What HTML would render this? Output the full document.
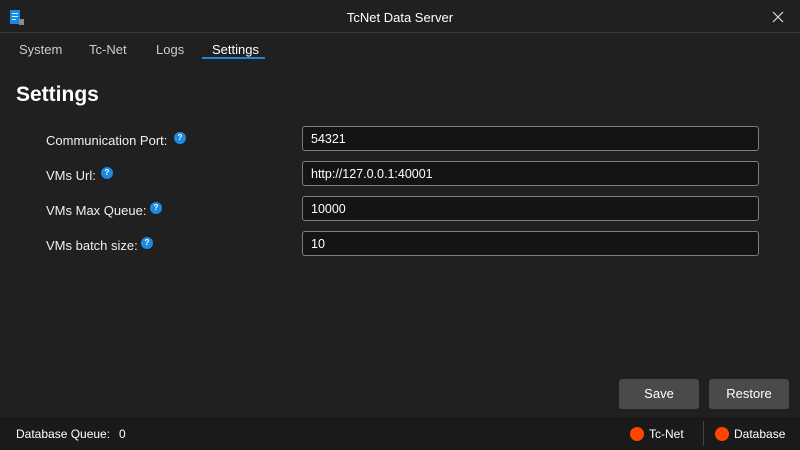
<!DOCTYPE html>
<html><head><style>
*{margin:0;padding:0;box-sizing:border-box}
body{width:800px;height:450px;background:#202020;font-family:"Liberation Sans",sans-serif;color:#fff;position:relative;overflow:hidden}
.t{position:absolute;white-space:nowrap}
.inp{position:absolute;left:302px;width:457px;height:25px;background:#141414;border:1px solid #7d7d7d;border-radius:3px;font-size:12.5px;padding:5px 0 0 8px}
.q{position:absolute;width:12px;height:12px;border-radius:50%;background:#1d8ae0;font-size:8px;font-weight:bold;text-align:center;line-height:12px;color:#fff}
.lbl{font-size:13px;color:#f0f0f0}
.btn{position:absolute;top:379px;width:80px;height:30px;background:#4a4a4a;border-radius:3px;font-size:13px;text-align:center;line-height:30px}
.dot{position:absolute;width:14px;height:14px;border-radius:50%;background:#ff4500;top:427px}
</style></head><body>
<div style="position:absolute;left:0;top:0;width:800px;height:33px;background:#202020;border-bottom:1px solid #3a3a3a"></div>
<svg style="position:absolute;left:9px;top:9px" width="16" height="17"><rect x="1" y="1" width="10" height="14" fill="#1e88e5"/><rect x="3" y="4" width="6" height="1" fill="#cfe"/><rect x="3" y="7" width="6" height="1" fill="#cfe"/><rect x="3" y="10" width="4" height="1" fill="#cfe"/><rect x="10" y="10" width="5" height="6" fill="#8a8a8a"/></svg>
<div class="t" style="left:0;width:800px;text-align:center;top:10px;font-size:13px">TcNet Data Server</div>
<svg style="position:absolute;left:772px;top:11px" width="12" height="12"><path d="M1 1L11 11M11 1L1 11" stroke="#ddd" stroke-width="1.2"/></svg>
<div class="t" style="left:19px;top:42px;font-size:13px;color:#ccc">System</div>
<div class="t" style="left:89px;top:42px;font-size:13px;color:#ccc">Tc-Net</div>
<div class="t" style="left:156px;top:42px;font-size:13px;color:#ccc">Logs</div>
<div class="t" style="left:212px;top:42px;font-size:13px;color:#fff">Settings</div>
<div style="position:absolute;left:202px;top:57px;width:63px;height:2px;background:#1a84d8"></div>
<div class="t" style="left:16px;top:83px;font-size:21px;font-weight:bold">Settings</div>
<div class="t lbl" style="left:46px;top:133px">Communication Port:</div><div class="q" style="left:174px;top:132px">?</div>
<div class="t lbl" style="left:46px;top:168px">VMs Url:</div><div class="q" style="left:101px;top:167px">?</div>
<div class="t lbl" style="left:46px;top:203px">VMs Max Queue:</div><div class="q" style="left:150px;top:202px">?</div>
<div class="t lbl" style="left:46px;top:238px">VMs batch size:</div><div class="q" style="left:141px;top:237px">?</div>
<div class="inp" style="top:126px">54321</div>
<div class="inp" style="top:161px">http://127.0.0.1:40001</div>
<div class="inp" style="top:196px">10000</div>
<div class="inp" style="top:231px">10</div>
<div class="btn" style="left:619px">Save</div>
<div class="btn" style="left:709px">Restore</div>
<div style="position:absolute;left:0;top:417px;width:800px;height:33px;background:#1a1a1a"></div>
<div class="t" style="left:16px;top:427px;font-size:12px">Database Queue:</div>
<div class="t" style="left:119px;top:427px;font-size:12px">0</div>
<div class="dot" style="left:630px"></div>
<div class="t" style="left:649px;top:427px;font-size:12px">Tc-Net</div>
<div style="position:absolute;left:703px;top:421px;width:1px;height:25px;background:#444"></div>
<div class="dot" style="left:715px"></div>
<div class="t" style="left:734px;top:427px;font-size:12px">Database</div>
</body></html>
